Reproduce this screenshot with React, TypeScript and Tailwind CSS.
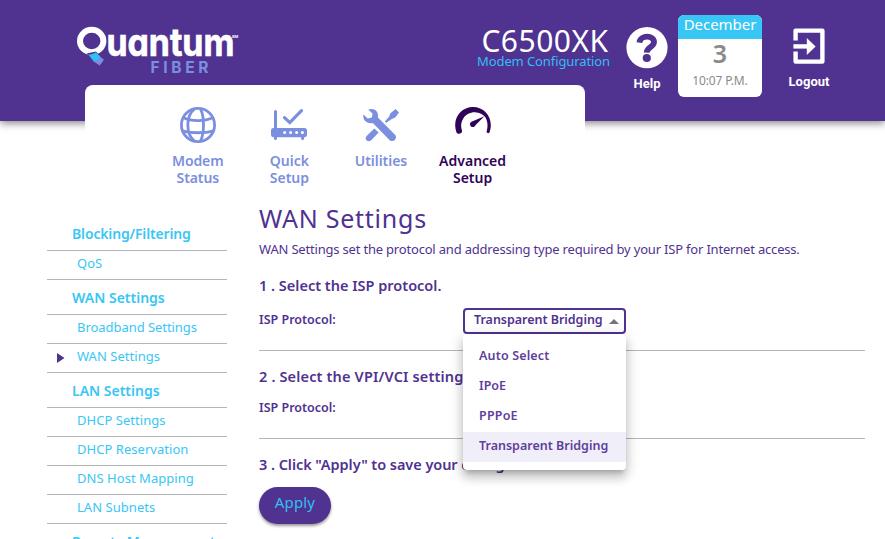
import { clsx } from 'clsx';

function Logo() {
  return (
    <svg width="166" height="52" viewBox="0 0 166 52" className="shrink-0">
      <ellipse cx="15.7" cy="15" rx="11.7" ry="11.2" fill="none" stroke="#fff" strokeWidth="6" />
      <path d="M10.5 27.5 L20 25.4 L27 33 L22.5 37.5 Z" fill="#503291" />
      <path d="M12.2 28.6 C15.4 28.6 18 27.6 19.8 26.2 L25 31.2 C23 33.6 20.6 35 17.8 35.6 Z" fill="#33bff3" />
      <path d="M17.4 35.2 C20.2 34.6 22.6 33.2 24.4 31 L27.8 33.6 C26.8 36 25.2 37.6 23.6 39.4 Z" fill="#7b8fe0" />
      <text
        x="30.4"
        y="30"
        textLength="128"
        lengthAdjust="spacingAndGlyphs"
        fill="#fff"
        stroke="#fff"
        strokeWidth="0.7"
        className="font-['Inter',sans-serif] text-[39px] font-bold [font-feature-settings:'cv11']"
      >
        uantum
      </text>
      <text x="156" y="12" fill="#fff" className="font-['Inter',sans-serif] text-[4px] font-bold">SM</text>
      <text x="74.4" y="47" fill="#7b8fe0" className="font-['Inter',sans-serif] text-[15.5px] font-bold tracking-[3.7px]">
        FIBER
      </text>
    </svg>
  );
}

function HelpIcon() {
  return (
    <svg width="42" height="42" viewBox="0 0 42 42">
      <circle cx="21" cy="20.6" r="20.6" fill="#fff" />
      <path d="M13.4 15.6 C14.4 7.6 28.2 8 28 15.2 C27.8 20.4 20.8 20 20.7 25.6" fill="none" stroke="#503291" strokeWidth="5.8" />
      <circle cx="20.8" cy="31" r="4.1" fill="#503291" />
    </svg>
  );
}

function LogoutIcon() {
  return (
    <svg width="32" height="36" viewBox="0 0 32 36" fill="none" stroke="#fff">
      <path d="M2.6 12.5 V2.6 H29.4 V33.6 H2.6 V23.5" strokeWidth="4.4" strokeLinejoin="round" />
      <path d="M0.4 18.4 H15" strokeWidth="4.4" />
      <path d="M13.8 10 L22.6 18.4 L13.8 27 Z" fill="#fff" stroke="none" />
    </svg>
  );
}

function GlobeIcon() {
  return (
    <svg width="36" height="36" viewBox="0 0 36 36" fill="none" stroke="currentColor" strokeWidth="2.8">
      <circle cx="18" cy="18" r="16.6" />
      <path d="M14.5 1.8 C5.6 9 5.6 27 14.5 34.2 M20.5 1.8 C24.5 10 24.5 26 20.5 34.2" />
      <path d="M3.6 10.8 C11 14.6 25 14.6 32.4 10.8 M2.2 23.8 C11 26.4 25 26.4 33.8 23.8" />
    </svg>
  );
}

function RouterIcon() {
  return (
    <svg width="36" height="36" viewBox="0 0 36 36" fill="none" stroke="currentColor">
      <rect x="0" y="21" width="36" height="9.2" rx="2.6" fill="currentColor" stroke="none" />
      <path d="M4.5 4.6 V24 M4.5 28 V31.6 M31.6 28 V31.6" strokeWidth="3" strokeLinecap="round" />
      <path d="M13.5 10.6 L18.8 15.6 L30.5 3.6" strokeWidth="3.2" strokeLinecap="round" />
      <g fill="#fff" stroke="none">
        <circle cx="13.6" cy="25.5" r="1.5" />
        <circle cx="19.6" cy="25.5" r="1.5" />
        <circle cx="25.6" cy="25.5" r="1.5" />
        <circle cx="31.4" cy="25.5" r="1.5" />
      </g>
    </svg>
  );
}

function ToolsIcon() {
  return (
    <svg width="36" height="36" viewBox="0 0 36 36" fill="currentColor">
      <path d="M5.2 2.6 C8.8 1.2 12.6 2.4 14.2 5.2 C15.2 7.2 15.2 8.8 14.9 10.6 L32.3 28 C34.6 31.6 30.6 35.8 27 33.4 L9.8 16 C4.6 17.2 -0.8 13.2 0.4 7.4 L4.7 11.5 L8.8 10.6 L9.6 6.8 Z" />
      <path d="M11.4 21.6 L15.6 25.6 L8.2 33.2 C5 36 0.8 32.2 3.6 29 Z" />
      <path d="M32.6 2 L36 5.4 L32.2 10.6 L28.8 12 L23.2 15.8 L21.8 14.6 L26.2 9.4 L27.2 6.6 Z" />
    </svg>
  );
}

function GaugeIcon() {
  return (
    <svg width="36" height="36" viewBox="0 0 36 36" fill="currentColor">
      <path d="M1.4 25.2 C-3.2 12 5.6 0 18 0 C30.4 0 39.2 12 34.6 25.2 C33.8 26.8 31.4 26.2 31.6 24.4 C33.4 18.4 32.4 13.4 30 9.8 L28.6 8.4 C21.6 3 12.4 5 8.4 11.2 C5.8 15.4 5.6 19.6 7 23.6 C7.4 27 2.8 27.8 1.4 25.2 Z" />
      <path d="M29.4 9.2 L20.6 18 C19.8 20.2 17.4 20.8 15.8 19.2 C14.2 17 15.4 14.6 17.6 14.2 Z" />
    </svg>
  );
}

const tabs = [
  { label: ['Modem', 'Status'], icon: <GlobeIcon />, tracking: 'tracking-[-0.1px]' },
  { label: ['Quick', 'Setup'], icon: <RouterIcon />, tracking: 'tracking-[-0.02px]' },
  { label: ['Utilities'], icon: <ToolsIcon />, tracking: 'tracking-[-0.05px]' },
  { label: ['Advanced', 'Setup'], icon: <GaugeIcon />, tracking: 'tracking-normal', active: true },
];

const sections = [
  { title: 'Blocking/Filtering', items: ['QoS'] },
  { title: 'WAN Settings', items: ['Broadband Settings', 'WAN Settings'] },
  { title: 'LAN Settings', items: ['DHCP Settings', 'DHCP Reservation', 'DNS Host Mapping', 'LAN Subnets'] },
  { title: 'Remote Management', items: [] },
];

const options = ['Auto Select', 'IPoE', 'PPPoE', 'Transparent Bridging'];

function Sidebar() {
  return (
    <nav className="w-[180px] shrink-0 pt-4 text-[#38c6f4]">
      {sections.map((s) => (
        <div key={s.title}>
          <div
            className={clsx(
              'flex h-[35px] items-center border-b border-[#b5b5b5] pt-px pl-[25px] text-[14px] font-semibold whitespace-nowrap',
              s.title === 'Blocking/Filtering' && 'tracking-[-0.15px]',
              s.title === 'Remote Management' && 'tracking-[-0.3px]',
            )}
          >
            {s.title}
          </div>
          {s.items.map((item) => (
            <div
              key={item}
              className={clsx(
                'flex h-[29px] items-center border-b border-[#b5b5b5] pb-[3px] text-[13px]',
                item === 'Broadband Settings' ? 'tracking-[-0.05px]' : 'tracking-[0.04px]',
              )}
            >
              <span className="flex w-[30px] shrink-0 justify-center pt-[3px]">
                {s.title === 'WAN Settings' && item === 'WAN Settings' && (
                  <svg width="8" height="10" viewBox="0 0 8 10" className="-ml-[3px]">
                    <path d="M0 0 L7.5 5 L0 10 Z" fill="#503291" />
                  </svg>
                )}
              </span>
              {item}
            </div>
          ))}
        </div>
      ))}
    </nav>
  );
}

function ProtocolSelect() {
  return (
    <div className="relative w-[163px] text-[12.5px] font-semibold">
      <div className="flex h-[26px] items-center justify-between rounded border-2 border-[#503291] pr-[5px] pb-px pl-[9px]">
        <span className="tracking-[-0.03px] whitespace-nowrap">Transparent Bridging</span>
        <svg width="10" height="5" viewBox="0 0 10 5" className="mt-px shrink-0">
          <path d="M0 5 L5 0 L10 5 Z" fill="#757575" />
        </svg>
      </div>
      <ul className="absolute top-[26px] left-0 z-10 w-full rounded bg-white py-2 shadow-[0_5px_5px_-3px_rgba(0,0,0,0.2),0_8px_10px_1px_rgba(0,0,0,0.14),0_3px_14px_2px_rgba(0,0,0,0.12)]">
        {options.map((o) => (
          <li
            key={o}
            className={clsx(
              'flex h-[30px] items-center pb-[2px] pl-4 whitespace-nowrap text-[#5f3f9c]',
              o === 'Transparent Bridging' && 'bg-[#f0eef8]',
              o === 'PPPoE' && 'tracking-[0.2px]',
              o === 'Auto Select' && 'tracking-[0.15px]',
            )}
          >
            {o}
          </li>
        ))}
      </ul>
    </div>
  );
}

export default function App() {
  return (
    <div className="h-[539px] w-[885px] overflow-hidden bg-white font-['Noto_Sans',sans-serif] text-[#503291]">
      <header className="flex h-[121px] items-start bg-[#503291] pl-[76px] text-white shadow-[0_2px_8px_rgba(0,0,0,0.5)]">
        <div className="pt-[26px]">
          <Logo />
        </div>
        <div className="ml-[234px] flex w-[135px] flex-col items-center pt-[27px]">
          <div className="pl-[3px] text-[30px] leading-7 tracking-[0.5px]">C6500XK</div>
          <div className="text-[13px] leading-3 tracking-[-0.1px] whitespace-nowrap text-[#33bff3]">Modem Configuration</div>
        </div>
        <div className="ml-[15px] flex w-[42px] flex-col items-center pt-[27px] font-['Roboto',sans-serif] text-[13px] font-bold">
          <HelpIcon />
          <div className="mt-[7px] leading-4">Help</div>
        </div>
        <div className="mt-[15px] ml-[10px] h-[82px] w-[84px] overflow-hidden rounded-md bg-white text-center">
          <div className="h-6 bg-[#38c6f4] text-[15px] leading-[19px] tracking-[-0.05px]">December</div>
          <div className="pt-[2px] text-[25px] leading-6 font-semibold text-[#8a8a8a]">3</div>
          <div className="mt-[6px] text-[12px] leading-5 tracking-[-0.15px] text-[#8a8a8a]">10:07 P.M.</div>
        </div>
        <div className="ml-[26px] flex w-[42px] flex-col items-center pt-[28px] font-['Roboto',sans-serif] text-[13px] font-bold">
          <LogoutIcon />
          <div className="mt-[10px] leading-4">Logout</div>
        </div>
      </header>

      <div className="relative -mt-9 ml-[85px] flex h-[115px] w-[500px] rounded-t-lg bg-white pt-[22px] pl-[67px]">
        {tabs.map((t) => (
          <div
            key={t.label[0]}
            className={clsx(
              'flex w-[91.6px] flex-col items-center text-center text-[14px] leading-[17px] font-semibold',
              t.tracking,
              t.active ? 'text-[#2e0358]' : 'text-[#7b8fe0]',
            )}
          >
            {t.icon}
            <div className="mt-[9px]">
              {t.label.map((l) => (
                <div key={l}>{l}</div>
              ))}
            </div>
          </div>
        ))}
      </div>

      <div className="flex pl-[47px]">
        <Sidebar />
        <main className="ml-8 w-[606px]">
          <h1 className="text-[25px] leading-[37px] tracking-[0.75px]">WAN Settings</h1>
          <p className="mt-[2px] text-[13px] leading-5 tracking-[-0.19px] whitespace-nowrap">
            WAN Settings set the protocol and addressing type required by your ISP for Internet access.
          </p>
          <section className="h-[92px] border-b border-[#b5b5b5] pt-4">
            <h2 className="text-[14.5px] leading-5 font-semibold">1 . Select the ISP protocol.</h2>
            <div className="mt-[13px] flex">
              <div className="w-[204px] text-[12.5px] leading-6 font-semibold">ISP Protocol:</div>
              <ProtocolSelect />
            </div>
          </section>
          <section className="h-[88px] border-b border-[#b5b5b5] pt-[15px]">
            <h2 className="text-[14.5px] leading-5 font-semibold tracking-[0.16px]">2 . Select the VPI/VCI settings.</h2>
            <div className="mt-[10px] text-[12.5px] leading-6 font-semibold">ISP Protocol:</div>
          </section>
          <section className="pt-[15px]">
            <h2 className="text-[14.5px] leading-5 font-semibold tracking-[-0.05px]">3 . Click "Apply" to save your changes.</h2>
            <button className="mt-[13px] h-[37px] w-[72px] rounded-full bg-[#503291] pb-[6px] text-[15px] tracking-[0.15px] text-[#33bff3] shadow-[0_2px_3px_rgba(0,0,0,0.4)]">
              Apply
            </button>
          </section>
        </main>
      </div>
    </div>
  );
}
